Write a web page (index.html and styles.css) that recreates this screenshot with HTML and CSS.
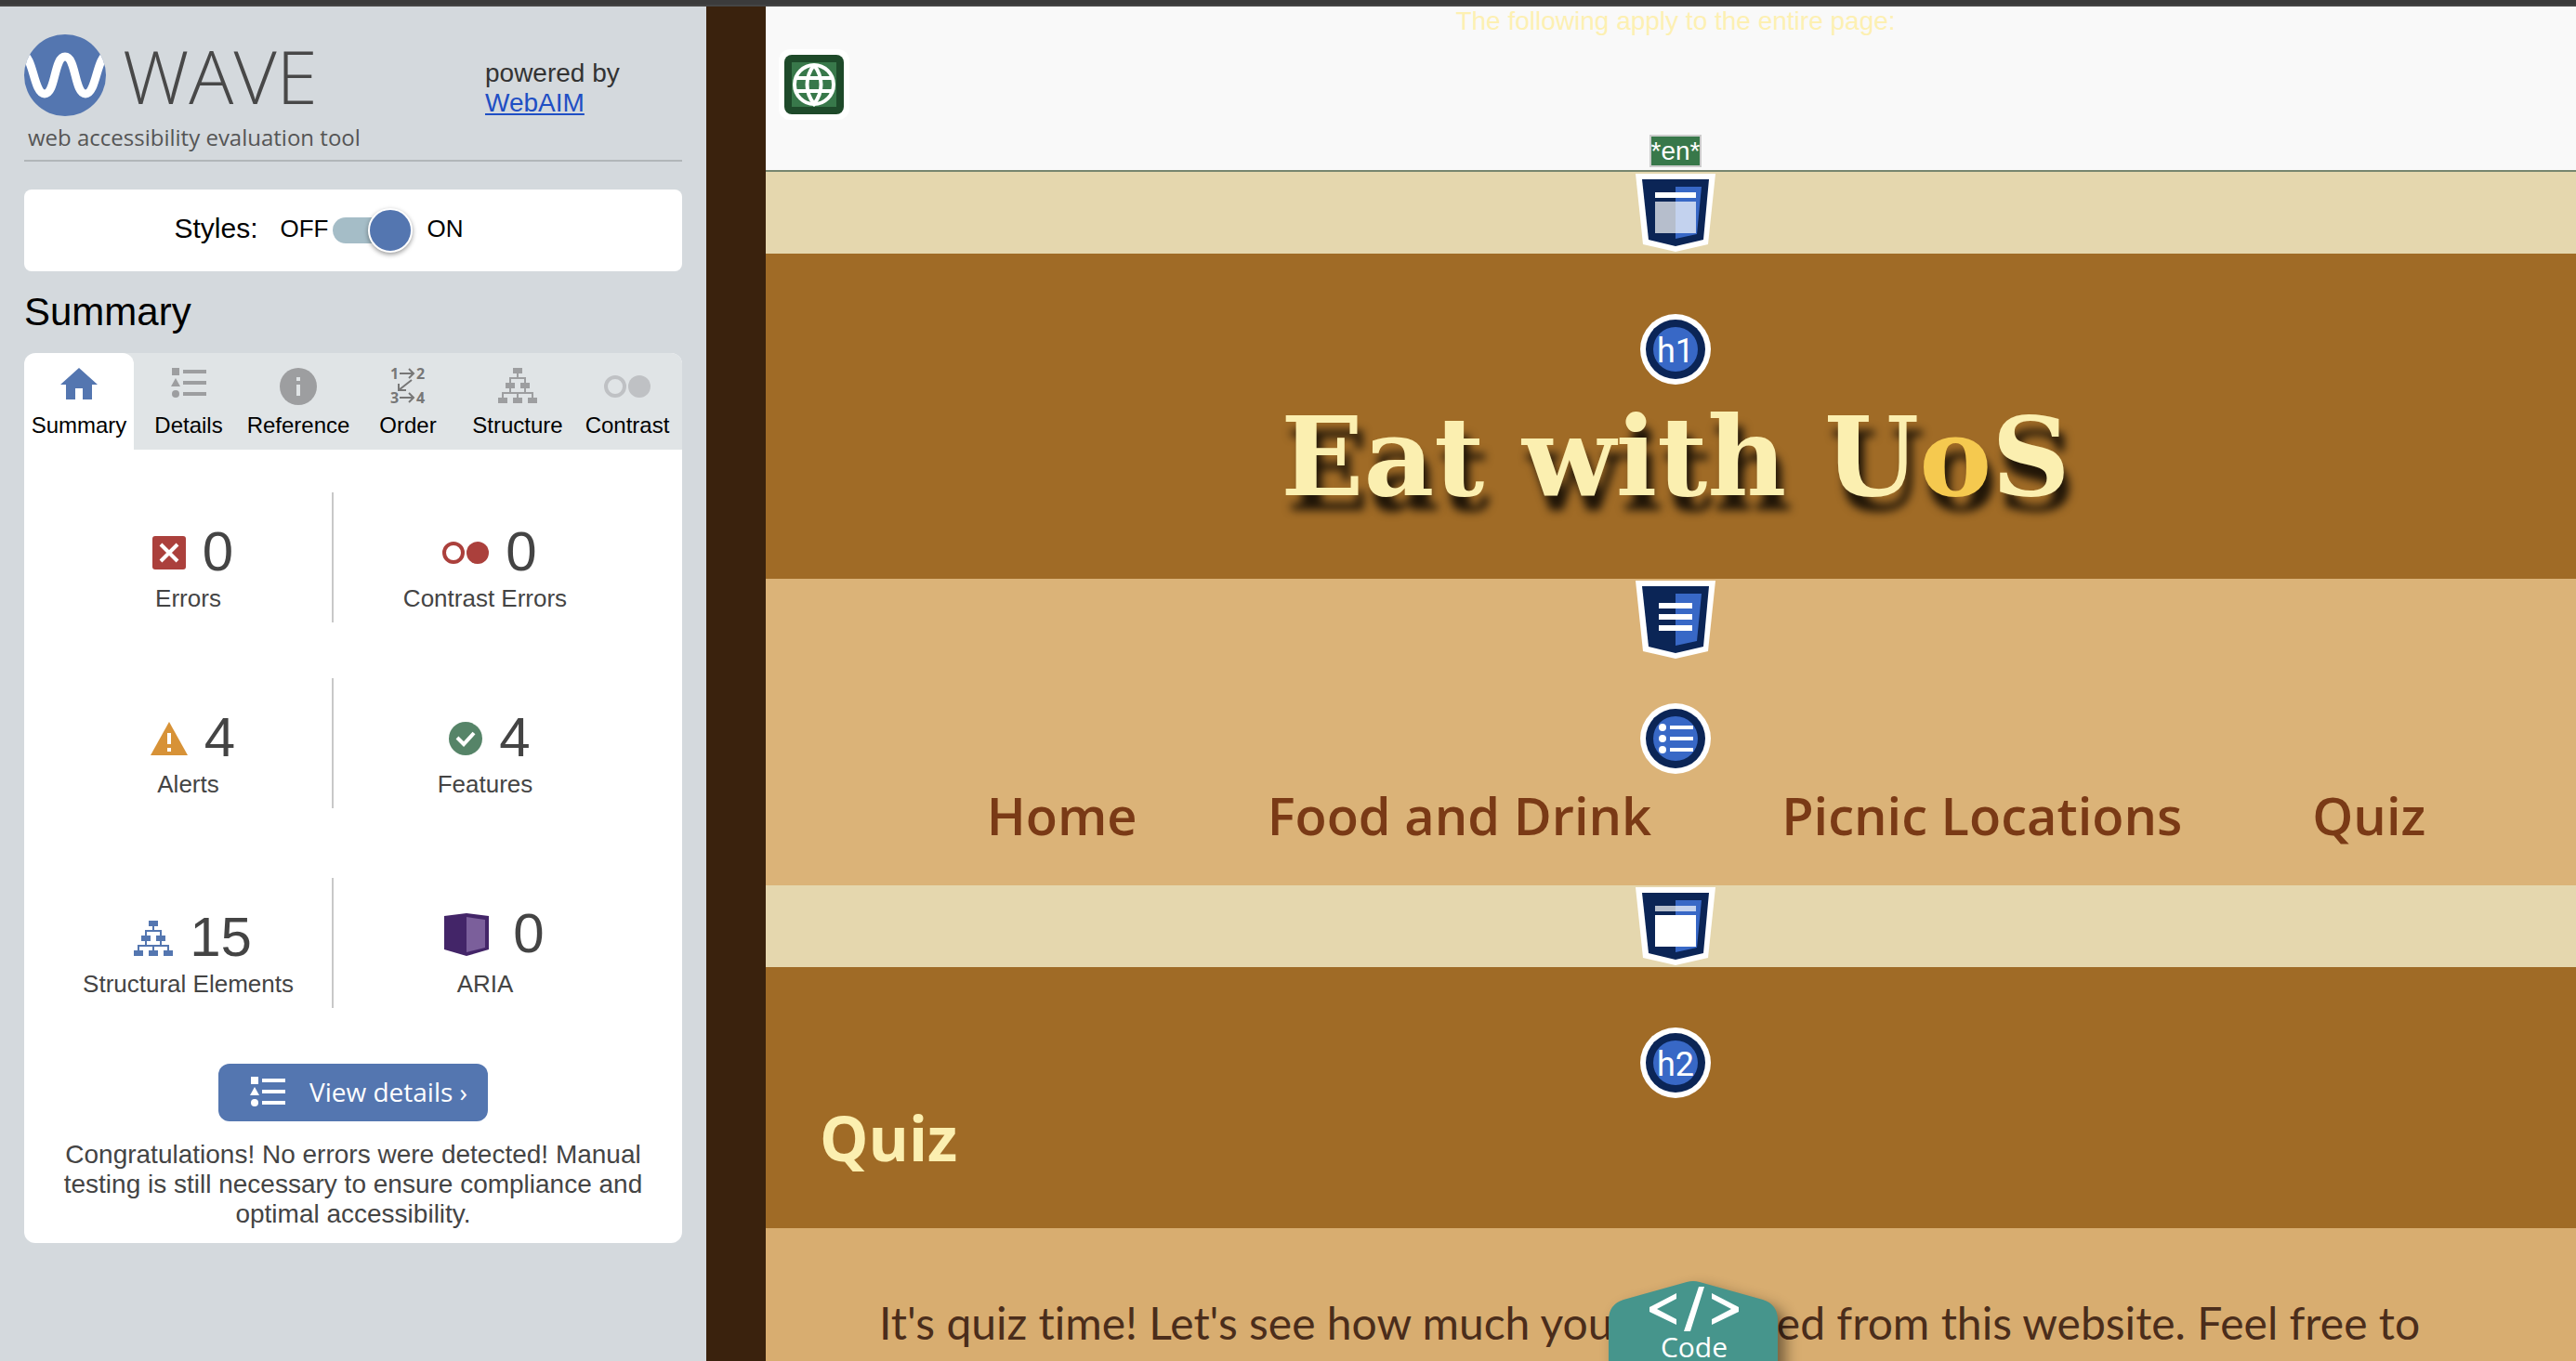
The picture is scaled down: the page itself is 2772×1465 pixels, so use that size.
FILE: index.html
```html
<!DOCTYPE html>
<html lang="en">
<head>
<meta charset="utf-8">
<title>Eat with UoS – WAVE report</title>
<link rel="stylesheet" href="styles.css">
</head>
<body>
<svg class="defs" aria-hidden="true">
  <symbol id="list" viewBox="0 0 38 32"><path d="M1 0h8v8H1zM5 11l5 9H0zM13 2h25v4H13zM13 14h25v4H13zM13 26h25v4H13z"/><circle cx="5" cy="28" r="4"/></symbol>
  <symbol id="tree" viewBox="0 0 42 38"><path d="M16 0h10v6H16zM8 16h10v6H8zM24 16h10v6H24zM0 32h10v6H0zM16 32h10v6H16zM32 32h10v6H32z"/><path fill="none" stroke="currentColor" stroke-width="2" d="M21 6v5M13 16v-5h16v5M13 22v5M29 22v5M5 32v-5h32v5M21 27v5"/></symbol>
  <symbol id="contrast" viewBox="0 0 50 24"><circle cx="12" cy="12" r="10" fill="none" stroke="currentColor" stroke-width="4"/><circle cx="38" cy="12" r="12"/></symbol>
  <symbol id="shield" viewBox="0 0 86 84"><path fill="#fff" d="M0 0h86l-8 76-35 8-35-8z"/><path fill="#0b2556" d="M7 6h72l-6 65-30 7-29-7z"/><path fill="#3868c6" d="M43 14h28l-5 51-23 5z"/></symbol>
  <symbol id="disc" viewBox="0 0 76 76"><circle cx="38" cy="38" r="38" fill="#fff"/><circle cx="38" cy="38" r="32" fill="#0b2556"/><circle cx="38" cy="38" r="24" fill="#3868c6"/></symbol>
</svg>

<div class="topbar"></div>
<div class="shell">
  <aside class="sidebar">
    <header class="brand">
      <div>
        <div class="logo">
          <svg width="88" height="88" viewBox="0 0 88 88" aria-hidden="true"><defs><clipPath id="c"><circle cx="44" cy="44" r="44"/></clipPath></defs><circle cx="44" cy="44" r="44" fill="#5476b0"/><path clip-path="url(#c)" d="M-2 22C10 22 10 64 22 64S32 24 44 24s10 40 22 40 12-42 24-42" fill="none" stroke="#fff" stroke-width="9"/></svg>
          <span class="wordmark">WAVE</span>
        </div>
        <p class="tagline">web accessibility evaluation tool</p>
      </div>
      <p class="powered">powered by<br><a href="#webaim">WebAIM</a></p>
    </header>

    <div class="styles">
      <span class="styles-label" id="styles-label">Styles:</span>
      <label class="switch"><span>OFF</span><input type="checkbox" role="switch" aria-labelledby="styles-label" checked><span>ON</span></label>
    </div>

    <h2 class="title">Summary</h2>
    <div class="panel">
      <nav class="tabs" role="tablist">
        <button class="tab active" role="tab" aria-selected="true"><span class="tab-icon"><svg width="40" height="34" viewBox="0 0 40 34"><path d="M20 0l20 18h-6v16H24V22h-8v12H6V18H0z"/></svg></span>Summary</button>
        <button class="tab" role="tab"><span class="tab-icon"><svg width="38" height="32"><use href="#list"/></svg></span>Details</button>
        <button class="tab" role="tab"><span class="tab-icon"><svg width="40" height="40" viewBox="0 0 40 40"><circle cx="20" cy="20" r="20"/><path fill="#e0e4e6" d="M18 10h4v4h-4zM18 18h4v12h-4z"/></svg></span>Reference</button>
        <button class="tab order" role="tab"><span class="tab-icon"><svg width="40" height="40" viewBox="0 0 40 40"><text x="1" y="12">1</text><text x="29" y="12">2</text><text x="1" y="38">3</text><text x="29" y="38">4</text><path fill="none" stroke="currentColor" stroke-width="2" d="M11 6h15M21 1l5 5-5 5M11 32h15M21 27l5 5-5 5M24 13L10 24M10 17v7h8"/></svg></span>Order</button>
        <button class="tab" role="tab"><span class="tab-icon"><svg width="42" height="38"><use href="#tree"/></svg></span>Structure</button>
        <button class="tab faint" role="tab"><span class="tab-icon"><svg width="50" height="24"><use href="#contrast"/></svg></span>Contrast</button>
      </nav>

      <div class="counts">
        <section class="count">
          <div class="figure"><svg class="red" width="36" height="36" viewBox="0 0 36 36"><rect width="36" height="36" rx="3"/><path d="M9 9l18 18M27 9L9 27" stroke="#fff" stroke-width="4"/></svg><b>0</b></div><p>Errors</p>
        </section>
        <section class="count">
          <div class="figure"><svg class="red" width="50" height="24"><use href="#contrast"/></svg><b>0</b></div><p>Contrast Errors</p>
        </section>
        <section class="count">
          <div class="figure"><svg class="amber" width="40" height="36" viewBox="0 0 40 36"><path d="M20 0l20 36H0z"/><path fill="#fff" d="M18 12h4v12h-4zM18 28h4v4h-4z"/></svg><b>4</b></div><p>Alerts</p>
        </section>
        <section class="count">
          <div class="figure"><svg class="green" width="36" height="36" viewBox="0 0 36 36"><circle cx="18" cy="18" r="18"/><path fill="none" stroke="#fff" stroke-width="4" d="M9 17l7 7 11-12"/></svg><b>4</b></div><p>Features</p>
        </section>
        <section class="count">
          <div class="figure"><svg class="blue" width="42" height="38"><use href="#tree"/></svg><b>15</b></div><p>Structural Elements</p>
        </section>
        <section class="count">
          <div class="figure aria"><svg width="48" height="46" viewBox="0 0 48 46"><path fill="#432568" d="M0 3l24-3 24 3v36l-24 7-24-7z"/><path fill="#7b5f9b" d="M24 4l20 3v30l-20 5z"/></svg><b>0</b></div><p>ARIA</p>
        </section>
      </div>

      <button class="details"><svg width="38" height="32"><use href="#list"/></svg>View details ›</button>
      <p class="message">Congratulations! No errors were detected! Manual testing is still necessary to ensure compliance and optimal accessibility.</p>
    </div>
  </aside>

  <main class="page">
    <div class="global">
      <p>The following apply to the entire page:</p>
      <svg class="globe" width="76" height="76" viewBox="0 0 76 76"><rect width="76" height="76" rx="12" fill="#fff"/><rect x="6" y="6" width="64" height="64" rx="8" fill="#1e4a2a"/><rect x="14" y="14" width="48" height="48" fill="#38784a"/><g fill="none" stroke="#fff" stroke-width="4"><circle cx="38" cy="38" r="21"/><path d="M38 17C28 30 28 46 38 59C48 46 48 30 38 17M19 31h38M19 45h38"/></g></svg>
      <span class="lang">*en*</span>
    </div>
    <div class="strip"><svg class="mark" width="86" height="84"><use href="#shield"/><path fill="#fff" d="M21 20h44v6H21z"/><path fill="#fff" fill-opacity=".7" d="M21 30h44v34H21z"/></svg></div>
    <header class="hero">
      <svg class="mark" width="76" height="76"><use href="#disc"/><text x="38" y="52">h1</text></svg>
      <h1>Eat with U<span>o</span>S</h1>
    </header>
    <nav class="menu">
      <svg class="mark" width="86" height="84"><use href="#shield"/><path fill="#fff" d="M25 24h36v6H25zM25 36h36v6H25zM25 48h36v6H25z"/></svg>
      <svg class="mark bullets" width="76" height="76"><use href="#disc"/><g fill="#fff"><circle cx="24" cy="26" r="4"/><circle cx="24" cy="38" r="4"/><circle cx="24" cy="50" r="4"/><path d="M32 24h25v4H32zM32 36h25v4H32zM32 48h25v4H32z"/></g></svg>
      <ul><li><a href="#home">Home</a></li><li><a href="#food">Food and Drink</a></li><li><a href="#picnic">Picnic Locations</a></li><li><a href="#quiz">Quiz</a></li></ul>
    </nav>
    <div class="strip"><svg class="mark" width="86" height="84"><use href="#shield"/><path fill="#fff" fill-opacity=".7" d="M21 20h44v6H21z"/><path fill="#fff" d="M21 30h44v34H21z"/></svg></div>
    <section class="quiz-head">
      <svg class="mark" width="76" height="76"><use href="#disc"/><text x="38" y="52">h2</text></svg>
      <h2>Quiz</h2>
    </section>
    <section class="intro"><p>It's quiz time! Let's see how much you've learned from this website. Feel free to</p></section>
    <button class="code">
      <svg class="code-shape" width="182" height="120" viewBox="0 0 182 120" aria-hidden="true"><path fill="#46958c" d="M84 2q7-2 14 0l68 19q16 5 16 22v77H0V43q0-17 16-22z"/></svg>
      <svg width="96" height="48" viewBox="0 0 96 48"><path fill="#fff" d="M29 7v6L8 24l21 11v6L0 27v-5zM67 7v6l21 11-21 11v6l29-14v-5zM53 0h6L44 48h-7z"/></svg>
      <span>Code</span>
    </button>
  </main>
</div>
</body>
</html>
```
FILE: styles.css
```css
* { box-sizing: border-box; }
html, body { height: 100%; }
body { margin: 0; display: flex; flex-direction: column; overflow: hidden; font-family: "Liberation Sans", Arial, sans-serif; color: #000; }
h1, h2, p, ul { margin: 0; padding: 0; font-weight: 400; }
button { border: 0; padding: 0; font: inherit; background: none; }
svg { display: block; flex: none; fill: currentColor; overflow: visible; }
.defs { position: absolute; width: 0; height: 0; }
.topbar { flex: none; height: 7px; background: #3b3b3b; border-bottom: 2px solid #454545; }
.shell { flex: 1; min-height: 0; display: flex; }

.sidebar { flex: none; width: 760px; padding: 30px 26px; background: #d4d9dd; overflow: hidden; }
.brand { display: flex; height: 137px; border-bottom: 2px solid #b1b6b9; }
.brand > div { width: 496px; }
.logo { display: flex; align-items: center; gap: 18px; height: 88px; color: #484848; }
.wordmark { font: 300 80px/88px "Open Sans", sans-serif; }
.tagline { padding-left: 4px; font: 400 24px/46px "Open Sans", sans-serif; color: #555; }
.powered { padding-top: 26px; font-size: 28px; line-height: 32px; color: #333; }
.powered a { color: #1f4fc4; }

.styles { display: flex; justify-content: center; align-items: center; gap: 24px; height: 88px; margin: 30px 0 22px; padding: 0 74px 4px 0; border-radius: 8px; background: #fff; font-size: 30px; }
.switch { display: flex; align-items: center; font-size: 26px; }
.switch input { appearance: none; display: flex; justify-content: flex-end; align-items: center; width: 86px; height: 28px; margin: 4px 16px 0 4px; border-radius: 14px; background: linear-gradient(90deg, #a5bdc7 70px, transparent 0); }
.switch input::before { content: ""; flex: none; width: 44px; height: 44px; border: 2px solid #fff; border-radius: 50%; background: #5476b0; box-shadow: 0 2px 5px #0006; }
.title { font-size: 42px; line-height: 44px; margin-bottom: 22px; }

.panel { padding-bottom: 8px; border-radius: 12px; background: #fff; color: #444; }
.tabs { display: grid; grid-template-columns: repeat(6, 1fr); height: 104px; border-radius: 12px 12px 0 0; background: #e0e4e6; overflow: hidden; }
.tab { display: flex; flex-direction: column; align-items: center; padding-top: 16px; font-size: 24px; line-height: 28px; color: #000; }
.tab-icon { display: flex; align-items: flex-start; height: 40px; margin-bottom: 8px; color: #9d9ea0; }
.active { border-radius: 12px 12px 0 0; background: #fff; }
.active .tab-icon { color: #5476b0; }
.faint .tab-icon { align-items: center; color: #bfc1c4; }
.order .tab-icon { color: #777; font: 700 16px "Open Sans", sans-serif; }

.counts { display: grid; grid-template-columns: 311px 326px; row-gap: 60px; margin: 46px 0 0 22px; }
.count { height: 140px; padding-top: 31px; text-align: center; }
.count:nth-child(odd) { border-right: 2px solid #c8c8c8; }
.count:nth-child(n + 5) { margin-top: 15px; }
.figure { display: flex; justify-content: center; align-items: center; gap: 18px; height: 66px; padding-left: 10px; }
.figure b { font-weight: 400; font-size: 60px; line-height: 66px; }
.figure svg { margin-top: 2px; }
.count p { font-size: 26px; line-height: 30px; padding-top: 2px; }
.aria { gap: 26px; height: 58px; margin-bottom: 8px; padding-left: 20px; }
.red { color: #ab403c; }
.amber { color: #d79237; }
.green { color: #568468; }
.blue { color: #5476b0; }

.details { display: flex; align-items: center; gap: 26px; width: 290px; height: 62px; margin: 60px auto 20px; padding: 0 0 2px 34px; border-radius: 12px; background: #5476b0; color: #fff; font: 400 28px/58px "Open Sans", sans-serif; }
.message { padding: 0 36px; text-align: center; font-size: 28px; line-height: 32px; padding-bottom: 7px; }

.page { position: relative; flex: 1; display: flex; flex-direction: column; border-left: 64px solid #3a220d; background: #d8ad70; overflow: hidden; }
.mark { align-self: center; }
.mark text { fill: #fff; font: 400 36px Roboto, sans-serif; text-anchor: middle; }
.global { flex: none; display: flex; flex-direction: column; align-items: center; height: 178px; border-bottom: 2px solid #77866f; background: #f9f9f9; color: #fdf0b2; font-size: 28px; line-height: 32px; padding-left: 10px; }
.globe { align-self: flex-start; margin: 14px 0 16px 4px; }
.lang { border: 2px solid #ccc; background: #38784a; color: #fff; line-height: 31px; }
.strip { flex: none; display: flex; justify-content: center; align-items: center; height: 88px; padding-left: 10px; background: #e5d7ae; }
.hero { flex: none; display: flex; flex-direction: column; height: 350px; padding: 65px 0 0 10px; background: #a06b26; text-align: center; }
.hero h1 { font: 700 117px/140px "DejaVu Serif", serif; color: #fbefb0; text-shadow: 6px 16px 10px #000c; margin-top: 8px; }
.hero h1 span { color: #f5c94f; }
.menu { flex: none; display: flex; flex-direction: column; height: 330px; padding: 2px 0 0 10px; background: #dbb378; }
.bullets { margin-top: 48px; }
.menu ul { display: flex; justify-content: center; gap: 140px; padding-left: 66px; list-style: none; font: 600 56px/80px "Open Sans", sans-serif; margin-top: 4px; }
.menu a { color: #7a3a16; text-decoration: none; }
.quiz-head { flex: none; display: flex; flex-direction: column; height: 281px; padding: 65px 0 0 10px; background: #a06b26; }
.quiz-head h2 { padding-left: 48px; font: 700 66px/84px "Open Sans", sans-serif; color: #fbefb0; }
.intro { padding: 70px 0 0 122px; font: 400 48px/64px Lato, sans-serif; font-variant-ligatures: none; color: #4b2d1b; white-space: nowrap; }
.code { position: absolute; left: 907px; bottom: 0; display: flex; flex-direction: column; align-items: center; width: 182px; height: 87px; padding: 7px 0 0 2px; color: #fff; font: 400 30px/34px "Open Sans", sans-serif; }
.code svg, .code span { position: relative; }
.code .code-shape { position: absolute; top: 0; left: 0; filter: drop-shadow(8px 8px 8px #0007); }
```
